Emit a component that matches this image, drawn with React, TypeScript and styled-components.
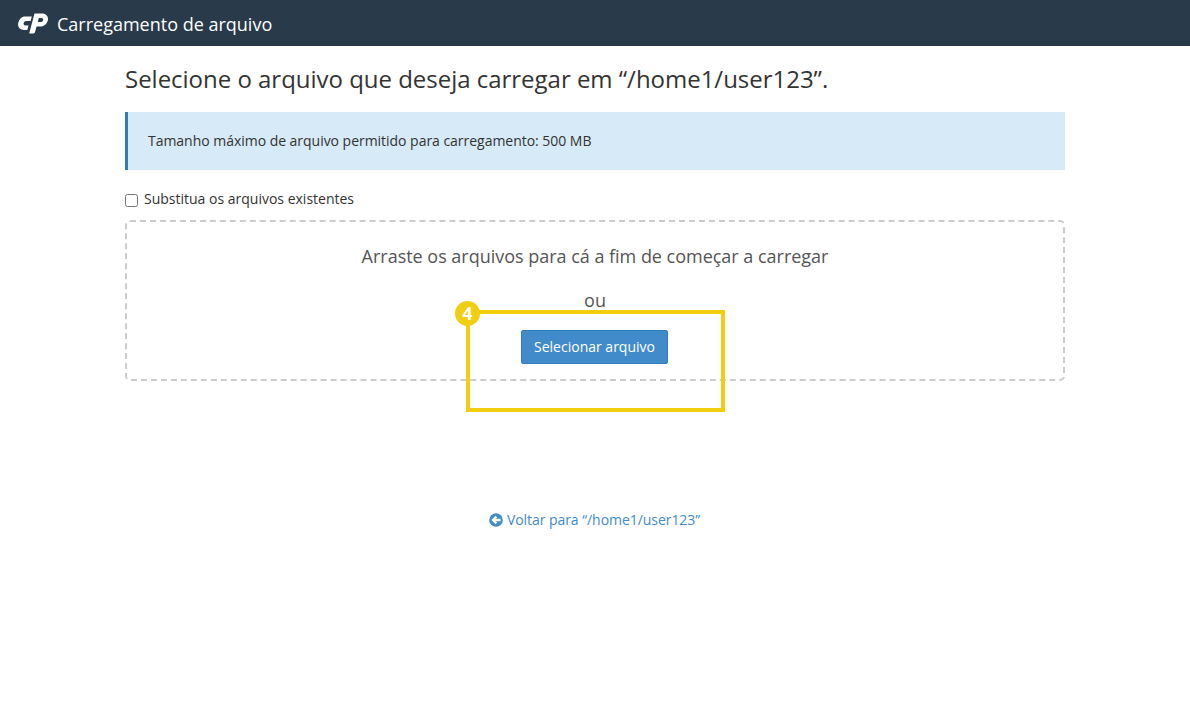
import React from 'react';
import styled, { createGlobalStyle } from 'styled-components';

const GlobalStyle = createGlobalStyle`
  html, body {
    margin: 0;
    padding: 0;
    background: #fff;
    font-family: 'Open Sans', 'Liberation Sans', sans-serif;
    color: #333;
  }
  * { box-sizing: border-box; }
`;

const TopBar = styled.header`
  height: 46px;
  background: #293a4a;
  display: flex;
  align-items: center;
  padding-left: 18px;
  gap: 9px;
`;

const TopTitle = styled.span`
  color: #fff;
  font-size: 18px;
  line-height: 24px;
  position: relative;
  top: 1px;
`;

const Main = styled.main`
  width: 940px;
  margin: 0 auto;
`;

const Heading = styled.h1`
  margin: 18px 0 0;
  font-size: 24px;
  line-height: 29px;
  font-weight: 400;
  letter-spacing: -0.02px;
  color: #333;
`;

const Alert = styled.div`
  margin-top: 19px;
  height: 58px;
  display: flex;
  align-items: center;
  padding: 0 0 2px 20px;
  background: #d6eaf7;
  border-left: 3px solid #337ab7;
  font-size: 14px;
  letter-spacing: -0.03px;
  color: #333;
`;

const CheckRow = styled.label`
  margin-top: 19px;
  height: 20px;
  display: flex;
  align-items: center;
  gap: 6px;
  font-size: 14px;
  color: #333;
`;

const CheckText = styled.span`
  position: relative;
  top: -1px;
`;

const Check = styled.input`
  width: 13px;
  height: 13px;
  margin: 2px 0 0;
`;

const DropZone = styled.section`
  position: relative;
  margin-top: 11px;
  height: 161px;
  border: 2px dashed #ccc;
  border-radius: 5px;
  display: flex;
  flex-direction: column;
  align-items: center;
  padding-top: 21px;
`;

const DropText = styled.div`
  font-size: 18px;
  line-height: 26px;
  letter-spacing: -0.02px;
  color: #555;
`;

const OrText = styled(DropText)`
  margin-top: 18px;
`;

const SelectButton = styled.button`
  margin: 17px 1px 0 0;
  height: 34px;
  width: 147px;
  padding: 0 0 2px;
  background: #428bca;
  border: 1px solid #357ebd;
  border-radius: 2px;
  color: #fff;
  font-family: inherit;
  font-size: 14px;
`;

const Highlight = styled.div`
  position: absolute;
  left: 339px;
  top: 88px;
  width: 259px;
  height: 102px;
  border: 4px solid #f2ce10;
`;

const Badge = styled.span`
  position: absolute;
  left: -15px;
  top: -13px;
  width: 25px;
  height: 25px;
  border-radius: 50%;
  background: #f2ce10;
  color: #fff;
  font-size: 18px;
  font-weight: 700;
  line-height: 25px;
  text-align: center;
`;

const BackRow = styled.div`
  margin-top: 129px;
  display: flex;
  justify-content: center;
`;

const BackLink = styled.a`
  display: flex;
  align-items: center;
  gap: 4px;
  margin-right: 1px;
  font-size: 14px;
  line-height: 20px;
  letter-spacing: -0.05px;
  color: #428bca;
  text-decoration: none;
`;

const CpLogo = () => (
  <svg width="30" height="21" viewBox="0 0 30 21" aria-hidden="true">
    <path
      fill="#fff"
      d="M7 3.5H13.8L12.6 8H8.5C7 8 6 8.8 5.7 10 5.3 11.4 6.2 12.5 7.6 12.5H10.5L9.3 17H6C2 17 -0.8 13.8 0.3 9.8 1.2 6 3.8 3.5 7 3.5Z"
    />
    <path
      fill="#fff"
      d="M16.5 0.5H24C28 0.5 30.8 3.6 29.8 7.4 28.8 11 25.8 13.5 22.2 13.5H18.5L19.7 9H22.5C23.8 9 24.8 8.3 25.1 7.2 25.5 5.8 24.6 5 23.3 5H20.8L17 19.3C16.8 20 16.2 20.5 15.5 20.5H11.2L16.5 0.5Z"
    />
  </svg>
);

const BackIcon = () => (
  <svg width="14" height="14" viewBox="0 0 14 14" aria-hidden="true">
    <circle cx="7" cy="7" r="6.8" fill="#428bca" />
    <path fill="#fff" d="M2.4 7 6.6 2.8 8.2 4.4 6.7 5.8H11.6V8.2H6.7L8.2 9.6 6.6 11.2Z" />
  </svg>
);

export default function App() {
  return (
    <>
      <GlobalStyle />
      <TopBar>
        <CpLogo />
        <TopTitle>Carregamento de arquivo</TopTitle>
      </TopBar>
      <Main>
        <Heading>Selecione o arquivo que deseja carregar em “/home1/user123”.</Heading>
        <Alert>Tamanho máximo de arquivo permitido para carregamento: 500 MB</Alert>
        <CheckRow>
          <Check type="checkbox" />
          <CheckText>Substitua os arquivos existentes</CheckText>
        </CheckRow>
        <DropZone>
          <DropText>Arraste os arquivos para cá a fim de começar a carregar</DropText>
          <OrText>ou</OrText>
          <SelectButton>Selecionar arquivo</SelectButton>
          <Highlight>
            <Badge>4</Badge>
          </Highlight>
        </DropZone>
        <BackRow>
          <BackLink href="#">
            <BackIcon />
            Voltar para “/home1/user123”
          </BackLink>
        </BackRow>
      </Main>
    </>
  );
}
